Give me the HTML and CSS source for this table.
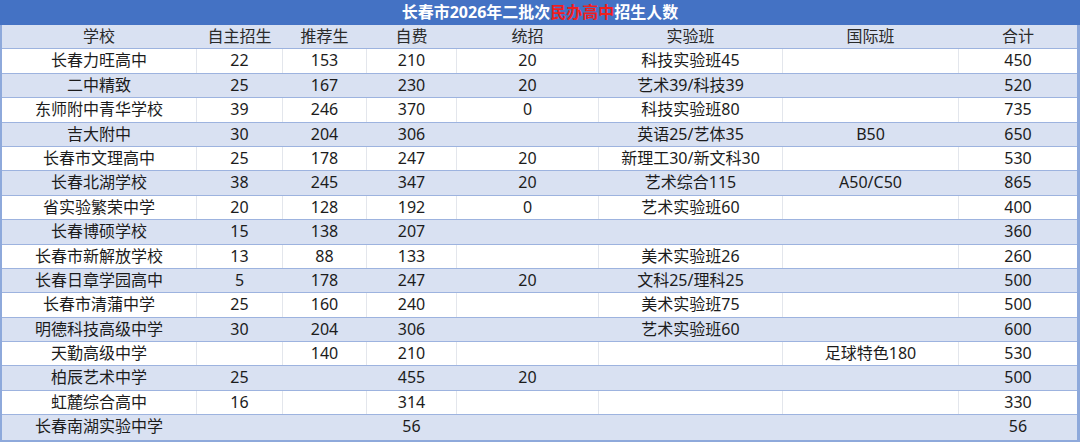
FILE: index.html
```html
<!DOCTYPE html>
<html lang="zh-CN">
<head>
<meta charset="utf-8">
<title>长春市2026年二批次民办高中招生人数</title>
<link rel="stylesheet" href="styles.css">
</head>
<body>
<div class="table">
  <div class="title">长春市2026年二批次<span class="red">民办高中</span>招生人数</div>
  <div class="row head"><div>学校</div><div>自主招生</div><div>推荐生</div><div>自费</div><div>统招</div><div>实验班</div><div>国际班</div><div>合计</div></div>
  <div class="row"><div>长春力旺高中</div><div>22</div><div>153</div><div>210</div><div>20</div><div>科技实验班45</div><div></div><div>450</div></div>
  <div class="row band"><div>二中精致</div><div>25</div><div>167</div><div>230</div><div>20</div><div>艺术39/科技39</div><div></div><div>520</div></div>
  <div class="row"><div>东师附中青华学校</div><div>39</div><div>246</div><div>370</div><div>0</div><div>科技实验班80</div><div></div><div>735</div></div>
  <div class="row band"><div>吉大附中</div><div>30</div><div>204</div><div>306</div><div></div><div>英语25/艺体35</div><div>B50</div><div>650</div></div>
  <div class="row"><div>长春市文理高中</div><div>25</div><div>178</div><div>247</div><div>20</div><div>新理工30/新文科30</div><div></div><div>530</div></div>
  <div class="row band"><div>长春北湖学校</div><div>38</div><div>245</div><div>347</div><div>20</div><div>艺术综合115</div><div>A50/C50</div><div>865</div></div>
  <div class="row"><div>省实验繁荣中学</div><div>20</div><div>128</div><div>192</div><div>0</div><div>艺术实验班60</div><div></div><div>400</div></div>
  <div class="row band"><div>长春博硕学校</div><div>15</div><div>138</div><div>207</div><div></div><div></div><div></div><div>360</div></div>
  <div class="row"><div>长春市新解放学校</div><div>13</div><div>88</div><div>133</div><div></div><div>美术实验班26</div><div></div><div>260</div></div>
  <div class="row band"><div>长春日章学园高中</div><div>5</div><div>178</div><div>247</div><div>20</div><div>文科25/理科25</div><div></div><div>500</div></div>
  <div class="row"><div>长春市清蒲中学</div><div>25</div><div>160</div><div>240</div><div></div><div>美术实验班75</div><div></div><div>500</div></div>
  <div class="row band"><div>明德科技高级中学</div><div>30</div><div>204</div><div>306</div><div></div><div>艺术实验班60</div><div></div><div>600</div></div>
  <div class="row"><div>天勤高级中学</div><div></div><div>140</div><div>210</div><div></div><div></div><div>足球特色180</div><div>530</div></div>
  <div class="row band"><div>柏辰艺术中学</div><div>25</div><div></div><div>455</div><div>20</div><div></div><div></div><div>500</div></div>
  <div class="row"><div>虹麓综合高中</div><div>16</div><div></div><div>314</div><div></div><div></div><div></div><div>330</div></div>
  <div class="row band last"><div>长春南湖实验中学</div><div></div><div></div><div>56</div><div></div><div></div><div></div><div>56</div></div>
</div>
</body>
</html>
```
FILE: styles.css
```css
html, body {
  margin: 0;
  padding: 0;
  background: #ffffff;
}
body {
  width: 1080px;
  height: 443px;
  overflow: hidden;
  font-family: "Noto Sans", "Noto Sans CJK SC", sans-serif;
  color: #1c1c1c;
}
.table {
  width: 1080px;
  box-sizing: border-box;
  border-left: 2px solid #8ea9db;
  border-right: 3px solid #8ea9db;
  border-bottom: 2px solid #8ea9db;
}
.title {
  height: 25px;
  background: #4472c4;
  color: #ffffff;
  font-weight: bold;
  font-size: 16px;
  line-height: 25px;
  text-align: center;
  margin-left: -2px;
  margin-right: -3px;
}
.red {
  color: #f01f1f;
}
.row {
  display: grid;
  grid-template-columns: 195px 86px 84px 90px 142px 184px 176px 1fr;
  height: 24.4px;
  box-sizing: border-box;
  border-bottom: 1px solid #9db3df;
  font-size: 16px;
  line-height: 23px;
  text-align: center;
  background: #ffffff;
}
.row > div {
  border-right: 1px solid #e3e6ec;
  white-space: nowrap;
  overflow: hidden;
}
.row > div:last-child {
  border-right: none;
}
.row.head,
.row.band {
  background: #d9e1f2;
}
.row.head > div,
.row.band > div {
  border-right-color: transparent;
}
.row.head {
  color: #2a2a2a;
}
.row.last {
  border-bottom: none;
}
```
